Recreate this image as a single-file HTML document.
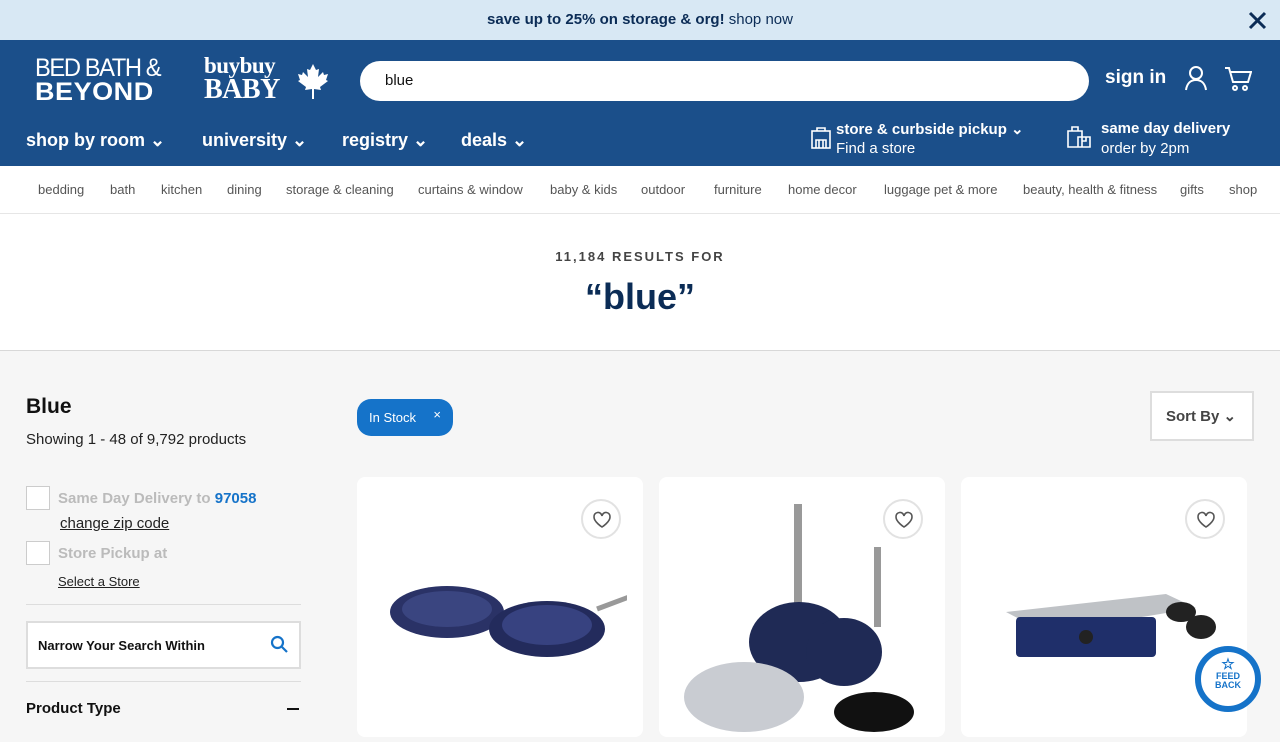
<!DOCTYPE html>
<html><head><meta charset="utf-8"><style>
*{box-sizing:border-box;margin:0;padding:0}
body{width:1280px;height:720px;overflow:hidden;background:#f6f6f6;font-family:"Liberation Sans",sans-serif;position:relative}
.ab{position:absolute}
.banner{top:0;left:0;width:1280px;height:40px;background:#d8e8f4;text-align:center;line-height:40px;font-size:15px;color:#0b2c56}
.hdr{top:40px;left:0;width:1280px;height:126px;background:#1b4f8a;color:#fff}
.nav a{position:absolute;font-weight:bold;font-size:18px;color:#fff;top:90px}
.cats{top:166px;left:0;width:1280px;height:48px;background:#fff;border-bottom:1px solid #e6e6e6;font-size:13px;color:#555}
.cats span{position:absolute;top:16px}
.res{top:214px;left:0;width:1280px;height:137px;background:#fff;border-bottom:1px solid #d8d8d8;text-align:center}
.card{background:#fff;border-radius:8px;top:477px;width:286px;height:260px}
.heart{width:40px;height:40px;border:2px solid #e2e2e2;border-radius:50%;background:#fff;top:22px;right:22px}
.heart svg{position:absolute;left:9px;top:10px}
.cb{width:24px;height:24px;border:1px solid #ccc;background:#fff;left:26px}
</style></head><body>
<div class="ab banner"><b>save up to 25% on storage &amp; org!</b> shop now</div>
<svg class="ab" style="left:1248px;top:11px" width="19" height="19" viewBox="0 0 19 19" stroke="#0b2c56" stroke-width="3"><path d="M2 2l15 15M17 2L2 17"/></svg>
<div class="ab hdr">
 <div class="ab" style="left:35px;top:17px;font-size:25px;letter-spacing:-1.5px;line-height:23px;transform:scaleX(0.95);transform-origin:left">BED BATH &amp;</div>
 <div class="ab" style="left:35px;top:40px;font-size:25px;font-weight:900;line-height:24px;letter-spacing:0.5px;transform:scaleX(1.08);transform-origin:left">BEYOND</div>
 <div class="ab" style="left:204px;top:14px;font-family:'Liberation Serif',serif;font-weight:bold;font-size:23px;line-height:24px;letter-spacing:-0.5px">buybuy<br><span style="font-size:28px">BABY</span></div>
 <svg class="ab" style="left:297px;top:23px" width="32" height="36" viewBox="0 0 32 36" fill="#fff"><path d="M16 1l3 6 3-1-1 8 5-5 1 3 4-1-2 6 2 1-8 6 1 3-7-1v10h-2V26l-7 1 1-3-8-6 2-1-2-6 4 1 1-3 5 5-1-8 3 1z"/></svg>
 <div class="ab" style="left:360px;top:21px;width:729px;height:40px;background:#fff;border-radius:20px;color:#111;font-size:15px;padding:11px 25px">blue</div>
 <div class="ab" style="left:1105px;top:27px;font-weight:bold;font-size:19px">sign in</div>
 <svg class="ab" style="left:1184px;top:25px" width="24" height="26" viewBox="0 0 24 26" fill="none" stroke="#fff" stroke-width="2"><circle cx="12" cy="8" r="6"/><path d="M2 25c1-7 5-10 10-10s9 3 10 10"/></svg>
 <svg class="ab" style="left:1224px;top:26px" width="28" height="26" viewBox="0 0 28 26" fill="none" stroke="#fff" stroke-width="2"><path d="M1 2h4l4 14h15l3-10H7"/><circle cx="11" cy="22" r="2"/><circle cx="21" cy="22" r="2"/></svg>
 <div class="nav"><a style="left:26px">shop by room ⌄</a><a style="left:202px">university ⌄</a><a style="left:342px">registry ⌄</a><a style="left:461px">deals ⌄</a></div>
 <svg class="ab" style="left:810px;top:85px" width="22" height="24" viewBox="0 0 22 24" fill="none" stroke="#fff" stroke-width="1.6"><rect x="2" y="6" width="18" height="17"/><path d="M7 6V3h8v3M6 23v-8h10v8M9 15v8M13 15v8"/></svg>
 <div class="ab" style="left:836px;top:80px;font-weight:bold;font-size:15px">store &amp; curbside pickup ⌄</div>
 <div class="ab" style="left:836px;top:100px;font-size:15px">Find a store</div>
 <svg class="ab" style="left:1066px;top:84px" width="26" height="24" viewBox="0 0 26 24" fill="none" stroke="#fff" stroke-width="1.6"><path d="M2 7h14v16H2zM6 7V3h6v4M12 13h12v10H12zM16 13v4h4v-4"/></svg>
 <div class="ab" style="left:1101px;top:80px;font-weight:bold;font-size:15px">same day delivery</div>
 <div class="ab" style="left:1101px;top:100px;font-size:15px">order by 2pm</div>
</div>
<div class="ab cats"><span style="left:38px">bedding</span><span style="left:110px">bath</span><span style="left:161px">kitchen</span><span style="left:227px">dining</span><span style="left:286px">storage &amp; cleaning</span><span style="left:418px">curtains &amp; window</span><span style="left:550px">baby &amp; kids</span><span style="left:641px">outdoor</span><span style="left:714px">furniture</span><span style="left:788px">home decor</span><span style="left:884px">luggage pet &amp; more</span><span style="left:1023px">beauty, health &amp; fitness</span><span style="left:1180px">gifts</span><span style="left:1229px">shop</span></div>
<div class="ab res"><div style="margin-top:35px;font-size:13px;font-weight:bold;letter-spacing:2px;color:#444">11,184 RESULTS FOR</div><div style="margin-top:12px;font-size:36px;font-weight:bold;color:#0b2c56">“blue”</div></div>
<div class="ab" style="left:26px;top:395px;font-size:21px;font-weight:bold;color:#111">Blue</div>
<div class="ab" style="left:26px;top:431px;font-size:15px;color:#222">Showing 1 - 48 of 9,792 products</div>
<div class="ab cb" style="top:486px"></div>
<div class="ab" style="left:58px;top:490px;font-size:15px;font-weight:bold;color:#bbb">Same Day Delivery to <span style="color:#1573c9">97058</span></div>
<div class="ab" style="left:60px;top:515px;font-size:15px;color:#222;text-decoration:underline">change zip code</div>
<div class="ab cb" style="top:541px"></div>
<div class="ab" style="left:58px;top:545px;font-size:15px;font-weight:bold;color:#bbb">Store Pickup at</div>
<div class="ab" style="left:58px;top:574px;font-size:13px;color:#222;text-decoration:underline">Select a Store</div>
<div class="ab" style="left:26px;top:604px;width:275px;border-top:1px solid #ddd"></div>
<div class="ab" style="left:26px;top:621px;width:275px;height:48px;border:2px solid #ddd;background:#fff;font-size:13px;font-weight:bold;padding:15px 10px;color:#111">Narrow Your Search Within</div>
<svg class="ab" style="left:270px;top:635px" width="18" height="18" viewBox="0 0 18 18" fill="none" stroke="#1573c9" stroke-width="2.2"><circle cx="7.5" cy="7.5" r="5.5"/><path d="M12 12l5 5"/></svg>
<div class="ab" style="left:26px;top:681px;width:275px;border-top:1px solid #ddd"></div>
<div class="ab" style="left:26px;top:700px;font-size:15px;font-weight:bold;color:#111">Product Type</div>
<div class="ab" style="left:287px;top:708px;width:12px;height:2px;background:#111"></div>
<div class="ab" style="left:357px;top:399px;width:96px;height:37px;border-radius:14px;background:#1573c9;color:#fff;font-size:13px;padding:11px 12px">In Stock <span style="position:absolute;right:12px;top:8px">×</span></div>
<div class="ab" style="left:1150px;top:391px;width:104px;height:50px;border:2px solid #ddd;background:#fff;font-size:15px;font-weight:bold;color:#444;padding:14px 14px">Sort By ⌄</div>
<div class="ab card" style="left:357px"><div class="ab heart"><svg width="20" height="18" viewBox="0 0 20 18" fill="none" stroke="#555" stroke-width="1.6"><path d="M10 16S2 11 2 6a4 4 0 0 1 8-1 4 4 0 0 1 8 1c0 5-8 10-8 10z"/></svg></div>
<svg class="ab" style="left:30px;top:90px" width="240" height="110"><ellipse cx="60" cy="45" rx="57" ry="26" fill="#2a3266"/><ellipse cx="60" cy="42" rx="45" ry="18" fill="#3a4580"/><ellipse cx="160" cy="62" rx="58" ry="28" fill="#232b5c"/><ellipse cx="160" cy="58" rx="45" ry="20" fill="#374280"/><path d="M210 42l40-15" stroke="#999" stroke-width="5"/></svg></div>
<div class="ab card" style="left:659px"><div class="ab heart"><svg width="20" height="18" viewBox="0 0 20 18" fill="none" stroke="#555" stroke-width="1.6"><path d="M10 16S2 11 2 6a4 4 0 0 1 8-1 4 4 0 0 1 8 1c0 5-8 10-8 10z"/></svg></div>
<svg class="ab" style="left:25px;top:25px" width="250" height="240"><rect x="110" y="2" width="8" height="100" fill="#999"/><ellipse cx="115" cy="140" rx="50" ry="40" fill="#1f2a55"/><rect x="190" y="45" width="7" height="80" fill="#999"/><ellipse cx="160" cy="150" rx="38" ry="34" fill="#1f2a55"/><ellipse cx="60" cy="195" rx="60" ry="35" fill="#c9ccd2"/><ellipse cx="190" cy="210" rx="40" ry="20" fill="#111"/></svg></div>
<div class="ab card" style="left:961px"><div class="ab heart"><svg width="20" height="18" viewBox="0 0 20 18" fill="none" stroke="#555" stroke-width="1.6"><path d="M10 16S2 11 2 6a4 4 0 0 1 8-1 4 4 0 0 1 8 1c0 5-8 10-8 10z"/></svg></div>
<svg class="ab" style="left:25px;top:95px" width="240" height="90"><path d="M20 40l160-18 30 14-150 25z" fill="#bfc2c6"/><rect x="30" y="45" width="140" height="40" rx="4" fill="#1f2f6a"/><circle cx="100" cy="65" r="7" fill="#222"/><ellipse cx="195" cy="40" rx="15" ry="10" fill="#222"/><ellipse cx="215" cy="55" rx="15" ry="12" fill="#222"/></svg></div>
<div class="ab" style="left:1195px;top:646px;width:66px;height:66px;border-radius:50%;background:#fff;border:6px solid #1573c9;text-align:center;color:#1573c9;font-size:9px;font-weight:bold;line-height:9px;padding-top:6px"><span style="font-size:15px;line-height:14px">☆</span><br>FEED<br>BACK</div>
</body></html>
